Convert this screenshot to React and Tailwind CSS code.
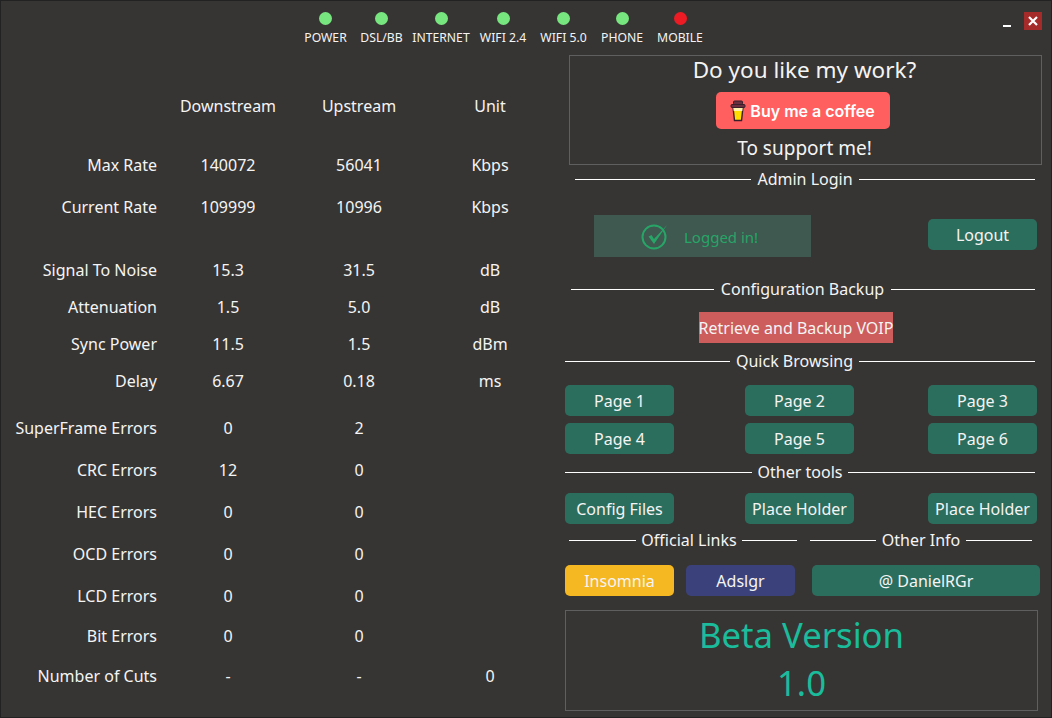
const leds = [
  ['POWER', true],
  ['DSL/BB', true],
  ['INTERNET', true],
  ['WIFI 2.4', true],
  ['WIFI 5.0', true],
  ['PHONE', true],
  ['MOBILE', false],
]

const rateRows = [
  ['Max Rate', '140072', '56041', 'Kbps'],
  ['Current Rate', '109999', '10996', 'Kbps'],
]
const lineRows = [
  ['Signal To Noise', '15.3', '31.5', 'dB'],
  ['Attenuation', '1.5', '5.0', 'dB'],
  ['Sync Power', '11.5', '1.5', 'dBm'],
  ['Delay', '6.67', '0.18', 'ms'],
]
const errorRows = [
  ['SuperFrame Errors', '0', '2', ''],
  ['CRC Errors', '12', '0', ''],
  ['HEC Errors', '0', '0', ''],
  ['OCD Errors', '0', '0', ''],
  ['LCD Errors', '0', '0', ''],
]

function Row({ cells, height }) {
  return (
    <div className={`grid grid-cols-[156px_142px_120px_142px] items-center ${height}`}>
      <div className="text-right whitespace-nowrap">{cells[0]}</div>
      <div className="text-center">{cells[1]}</div>
      <div className="text-center">{cells[2]}</div>
      <div className="text-center">{cells[3]}</div>
    </div>
  )
}

function Divider({ label, left, right, className = '' }) {
  return (
    <div className={`flex items-center ${className}`}>
      <span className={`h-px bg-white ${left}`} />
      <span className="flex-1 text-center whitespace-nowrap">{label}</span>
      <span className={`h-px bg-white ${right}`} />
    </div>
  )
}

function Btn({ children, className = 'bg-[#2c6e5e]' }) {
  return (
    <button className={`h-[31px] w-[109px] rounded-[5px] whitespace-nowrap ${className}`}>{children}</button>
  )
}

function CoffeeCup() {
  return (
    <svg width="16" height="22" viewBox="0 0 16 22" className="mr-[4px]">
      <path d="M3 7 L4.5 20.5 H11.5 L13 7 Z" fill="#ffdd00" stroke="#3b1f2b" strokeWidth="1.4" />
      <path d="M3.2 7 L3.7 11 H12.3 L12.8 7 Z" fill="#fff3b0" />
      <rect x="1" y="4.5" width="14" height="3" rx="1" fill="#6b2f3f" stroke="#3b1f2b" strokeWidth="1" />
      <rect x="3.5" y="1" width="9" height="3.5" rx="1" fill="#6b2f3f" stroke="#3b1f2b" strokeWidth="1" />
    </svg>
  )
}

export default function App() {
  return (
    <div
      className="w-[1052px] h-[718px] overflow-hidden border border-[#222222] bg-[#373533] text-[#f4f4f4] text-[16px]"
      style={{ fontFamily: '"Noto Sans", sans-serif' }}
    >
      <header className="flex h-[53px]">
        <div className="ml-[297px] grid grid-cols-[55px_57px_62px_62px_59px_58px_58px] pt-[11px] h-fit">
          {leds.map(([name, on]) => (
            <div key={name} className="flex flex-col items-center">
              <span className={`h-[13px] w-[13px] rounded-full ${on ? 'bg-[#77e67f]' : 'bg-[#ed1c24]'}`} />
              <span className="mt-[5px] text-[12.2px] leading-[16px] whitespace-nowrap">{name}</span>
            </div>
          ))}
        </div>
        <div className="ml-auto mr-[9px] mt-[11px] flex h-fit items-start">
          <span className="mt-[13px] h-[2px] w-[8px] bg-white" />
          <span className="ml-[13px] flex h-[18px] w-[18px] items-center justify-center bg-[#a52a2a]">
            <svg width="10" height="10" viewBox="0 0 10 10">
              <path d="M1 1 L9 9 M9 1 L1 9" stroke="#ffffff" strokeWidth="2.2" />
            </svg>
          </span>
        </div>
      </header>

      <div className="flex">
        <main className="w-[564px] shrink-0">
          <div className="mt-[31px]">
            <Row cells={['', 'Downstream', 'Upstream', 'Unit']} height="h-[42px]" />
          </div>
          <div className="mt-[17px]">
            {rateRows.map((r) => <Row key={r[0]} cells={r} height="h-[42px]" />)}
          </div>
          <div className="mt-[23px]">
            {lineRows.map((r) => <Row key={r[0]} cells={r} height="h-[37px]" />)}
          </div>
          <div className="mt-[8px]">
            {errorRows.map((r) => <Row key={r[0]} cells={r} height="h-[42px]" />)}
          </div>
          <Row cells={['Bit Errors', '0', '0', '']} height="h-[38px]" />
          <Row cells={['Number of Cuts', '-', '-', '0']} height="h-[42px]" />
        </main>

        <aside className="flex-1 pt-[1px]">
          <section className="ml-[4px] flex h-[110px] w-[473px] flex-col items-center border border-[#5f5f5f] pr-[2px]">
            <div className="text-[22.5px] leading-[28px]">Do you like my work?</div>
            <button
              className="mt-[8px] mr-[4px] flex h-[37px] w-[174px] items-center justify-center rounded-[5px] bg-[#ff5f5f] text-[16px] font-semibold text-white"
              style={{ fontFamily: 'Inter, sans-serif' }}
            >
              <CoffeeCup />
              Buy me a coffee
            </button>
            <div className="mt-[6px] text-[19px] leading-[26px]">To support me!</div>
          </section>

          <Divider className="ml-[10px] mt-[2px] h-[24px] w-[460px]" label="Admin Login" left="w-[176px]" right="w-[176px]" />

          <div className="mt-[24px] flex items-start">
            <div className="ml-[29px] flex h-[42px] w-[217px] items-center bg-[#3f5850] pl-[47px] text-[15px] text-[#27a567]">
              <svg width="28" height="28" viewBox="0 0 28 28">
                <circle cx="13" cy="15" r="11.5" fill="none" stroke="#27a567" strokeWidth="2" />
                <path d="M7.5 14.5 L10.5 13 L13 17 L26 3 L13 22 Z" fill="#27a567" />
              </svg>
              <span className="ml-[15px] mt-[3px]">Logged in!</span>
            </div>
            <Btn className="mt-[4px] ml-[117px] bg-[#2c6e5e]">Logout</Btn>
          </div>

          <Divider className="ml-[6px] mt-[20px] h-[24px] w-[464px]" label="Configuration Backup" left="w-[143px]" right="w-[144px]" />

          <button className="ml-[134px] mt-[11px] flex h-[31px] w-[194px] items-center justify-center whitespace-nowrap bg-[#cd5c5c]">
            Retrieve and Backup VOIP
          </button>

          <Divider className="mt-[6px] h-[24px] w-[470px]" label="Quick Browsing" left="w-[165px]" right="w-[176px]" />

          <div className="mt-[12px] grid grid-cols-[180px_183px_109px] gap-y-[7px]">
            {['Page 1', 'Page 2', 'Page 3', 'Page 4', 'Page 5', 'Page 6'].map((p) => (
              <Btn key={p}>{p}</Btn>
            ))}
          </div>

          <Divider className="mt-[6px] h-[24px] w-[470px]" label="Other tools" left="w-[187px]" right="w-[187px]" />

          <div className="mt-[9px] grid grid-cols-[180px_183px_109px]">
            <Btn>Config Files</Btn>
            <Btn>Place Holder</Btn>
            <Btn>Place Holder</Btn>
          </div>

          <div className="mt-[4px] flex h-[24px]">
            <Divider className="ml-[4px] w-[228px]" label="Official Links" left="w-[67px]" right="w-[55px]" />
            <Divider className="ml-[13px] w-[222px]" label="Other Info" left="w-[66px]" right="w-[66px]" />
          </div>

          <div className="mt-[13px] flex">
            <Btn className="bg-[#f5b722]">Insomnia</Btn>
            <Btn className="ml-[12px] bg-[#3b427b]">Adslgr</Btn>
            <Btn className="ml-[17px] !w-[228px] bg-[#2c6e5e]">@ DanielRGr</Btn>
          </div>

          <section className="mt-[14px] flex h-[101px] w-[473px] flex-col items-center border border-[#5f5f5f] text-[#1abc9c]">
            <div className="mt-[1px] text-[34.7px] leading-[46px]">Beta Version</div>
            <div className="text-[34.7px] leading-[50px]">1.0</div>
          </section>
        </aside>
      </div>
    </div>
  )
}
